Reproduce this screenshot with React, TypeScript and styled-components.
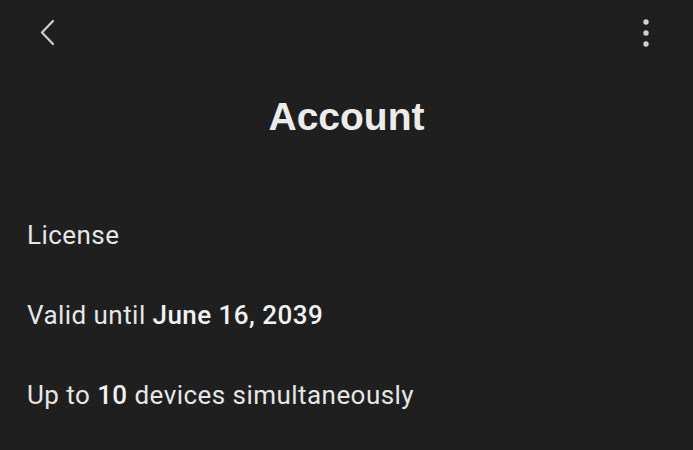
import styled, { createGlobalStyle } from 'styled-components'

const GlobalStyle = createGlobalStyle`
    html, body {
        margin: 0;
        padding: 0;
        background: #1f1f1f;
    }
`

const Page = styled.div`
    width: 693px;
    height: 450px;
    background: #1f1f1f;
    color: #e8e8e8;
    overflow: hidden;
`

const TopBar = styled.header`
    height: 66px;
    display: flex;
    align-items: center;
    justify-content: space-between;
    padding: 0 43px 0 40px;
`

const IconButton = styled.button`
    display: flex;
    align-items: center;
    justify-content: center;
    background: none;
    border: 0;
    padding: 0;
    color: #d0d0d0;
    cursor: pointer;
`

const Title = styled.h1`
    margin: 31px 0 0;
    text-align: center;
    font-family: 'Liberation Sans', Arial, sans-serif;
    font-weight: 700;
    font-size: 39px;
    line-height: 1;
    color: #ececec;
`

const Details = styled.section`
    display: flex;
    flex-direction: column;
    gap: 54px;
    margin-top: 86px;
    padding-left: 27px;
`

const Line = styled.p`
    margin: 0;
    font-family: Roboto, 'Noto Sans', sans-serif;
    font-size: 26px;
    line-height: 26px;
    letter-spacing: 0.45px;
    color: #e6e6e6;
`

const Strong = styled.strong`
    font-weight: 500;
    color: #f2f2f2;
`

export default function App() {
    return (
        <Page>
            <GlobalStyle />
            <TopBar>
                <IconButton aria-label="Back">
                    <svg width="16" height="28" viewBox="0 0 16 28" fill="none">
                        <path d="M13 2 L2 13.5 L13 25" stroke="currentColor" strokeWidth="2.2" strokeLinecap="round" strokeLinejoin="round" />
                    </svg>
                </IconButton>
                <IconButton aria-label="More options">
                    <svg width="8" height="30" viewBox="0 0 8 30" fill="currentColor">
                        <circle cx="4" cy="4" r="2.7" />
                        <circle cx="4" cy="15" r="2.7" />
                        <circle cx="4" cy="26" r="2.7" />
                    </svg>
                </IconButton>
            </TopBar>
            <Title>Account</Title>
            <Details>
                <Line>License</Line>
                <Line>
                    Valid until <Strong>June 16, 2039</Strong>
                </Line>
                <Line>
                    Up to <Strong>10</Strong> devices simultaneously
                </Line>
            </Details>
        </Page>
    )
}
